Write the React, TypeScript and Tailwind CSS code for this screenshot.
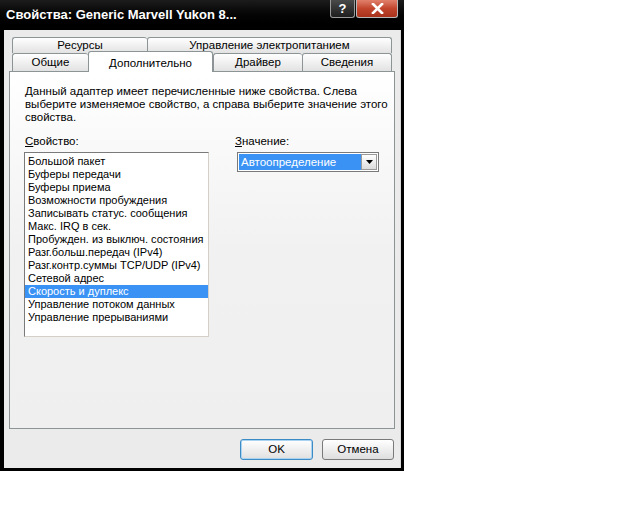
import React from "react";

const props = [
  "Большой пакет",
  "Буферы передачи",
  "Буферы приема",
  "Возможности пробуждения",
  "Записывать статус. сообщения",
  "Макс. IRQ в сек.",
  "Пробужден. из выключ. состояния",
  "Разг.больш.передач (IPv4)",
  "Разг.контр.суммы TCP/UDP (IPv4)",
  "Сетевой адрес",
  "Скорость и дуплекс",
  "Управление потоком данных",
  "Управление прерываниями",
];

const tab =
  "h-full flex items-center justify-center border-t border-l border-[#8c9496] rounded-t-[3px] bg-linear-to-b from-white to-[#e2e2e2] text-[11.5px] text-black";

export default function App() {
  return (
    <div
      className="min-h-[512px] bg-white"
      style={{ fontFamily: '"Liberation Sans", Arial, sans-serif' }}
    >
      <div className="w-[404px] h-[471px] bg-black flex flex-col">
        {/* title bar */}
        <div className="h-[30px] flex items-start justify-between bg-linear-to-b from-[#1c1c1c] to-black pl-[6px] pr-[6px]">
          <span className="mt-[7px] text-white font-bold text-[13px] leading-[16px]">
            Свойства: Generic Marvell Yukon 8...
          </span>
          <div className="flex gap-[1px]">
            <div className="w-[25px] h-[18px] rounded-b-[3px] border border-t-0 border-[#9a9a9a] bg-linear-to-b from-[#4a4a4a] to-[#1e1e1e] flex items-center justify-center text-white font-bold text-[13px] leading-none">
              ?
            </div>
            <div className="w-[42px] h-[18px] rounded-b-[3px] border border-t-0 border-[#b9b9b9] bg-linear-to-b from-[#e0806c] via-[#c2452c] to-[#a8321c] flex items-center justify-center">
              <svg width="13" height="11" viewBox="0 0 13 11">
                <path d="M2 1 L11 10 M11 1 L2 10" stroke="white" strokeWidth="2.6" strokeLinecap="square" />
              </svg>
            </div>
          </div>
        </div>

        {/* body */}
        <div className="flex-1 ml-[4px] mr-[3px] mb-[3px] bg-[#ebebeb] flex flex-col border-r border-[#d8d8d8]">
          {/* tabs */}
          <div className="ml-[8px] mt-[7px] w-[380px] flex h-[16px]">
            <div className={`${tab} w-[135px]`}>Ресурсы</div>
            <div className={`${tab} w-[245px] border-r`}>Управление электропитанием</div>
          </div>
          <div className="ml-[8px] w-[380px] flex items-start h-[18px]">
            <div className={`${tab} w-[76px]`}>Общие</div>
            <div className="relative z-10 w-[125px] h-[21px] -mt-[2px] -mb-[1px] flex items-start justify-center pt-[3px] border-t border-l border-r border-[#8c9496] rounded-t-[3px] bg-white text-[11.5px]">
              Дополнительно
            </div>
            <div className={`${tab} w-[89px]`}>Драйвер</div>
            <div className={`${tab} w-[90px] border-r`}>Сведения</div>
          </div>

          {/* panel */}
          <div className="ml-[5px] w-[386px] h-[358px] border border-[#8c9496] bg-linear-to-b from-white via-[#f1f1f1] to-[#efefef] pl-[15px] pt-[13px] text-[11.5px] text-black">
            <p className="leading-[13px] whitespace-nowrap">
              Данный адаптер имеет перечисленные ниже свойства. Слева
              <br />
              выберите изменяемое свойство, а справа выберите значение этого
              <br />
              свойства.
            </p>
            <div className="flex mt-[11px]">
              <div className="w-[185px] -ml-[1px]">
                <div className="leading-[13px] ml-[1px]">
                  <span className="underline">С</span>войство:
                </div>
                <div className="mt-[4px] h-[185px] border border-[#7a7a7a] border-r-[#d4d0c8] border-b-[#d4d0c8] bg-white pt-[2px] text-[11px]">
                  {props.map((p) => (
                    <div
                      key={p}
                      className={`h-[13px] leading-[13px] pl-[3px] whitespace-nowrap ${
                        p === "Скорость и дуплекс" ? "bg-[#3a92f5] text-white" : ""
                      }`}
                    >
                      {p}
                    </div>
                  ))}
                </div>
              </div>
              <div className="ml-[26px]">
                <div className="leading-[13px]">
                  <span className="underline">З</span>начение:
                </div>
                <div className="mt-[4px] ml-[2px] w-[142px] h-[20px] border border-[#7a7a7a] bg-white flex items-center p-[1px]">
                  <div className="flex-1 h-full bg-[#3a92f5] text-white leading-[16px] pl-[2px]">
                    Автоопределение
                  </div>
                  <div className="w-[16px] h-full border border-[#9a9a9a] bg-linear-to-b from-white to-[#dcdcdc] flex items-center justify-center">
                    <svg width="7" height="4" viewBox="0 0 7 4">
                      <path d="M0 0 H7 L3.5 4 Z" fill="black" />
                    </svg>
                  </div>
                </div>
              </div>
            </div>
          </div>

          {/* buttons */}
          <div className="mt-[10px] flex justify-end gap-[9px] mr-[6px]">
            <button className="w-[73px] h-[21px] rounded-[3px] border border-[#3c8bc4] shadow-[inset_0_0_0_1px_#a9d3f0] bg-linear-to-b from-white to-[#e0e0e0] text-[11.5px] text-black">
              OK
            </button>
            <button className="w-[72px] h-[21px] rounded-[3px] border border-[#7a7a7a] bg-linear-to-b from-white to-[#dedede] text-[11.5px] text-black">
              Отмена
            </button>
          </div>
        </div>
      </div>
    </div>
  );
}
